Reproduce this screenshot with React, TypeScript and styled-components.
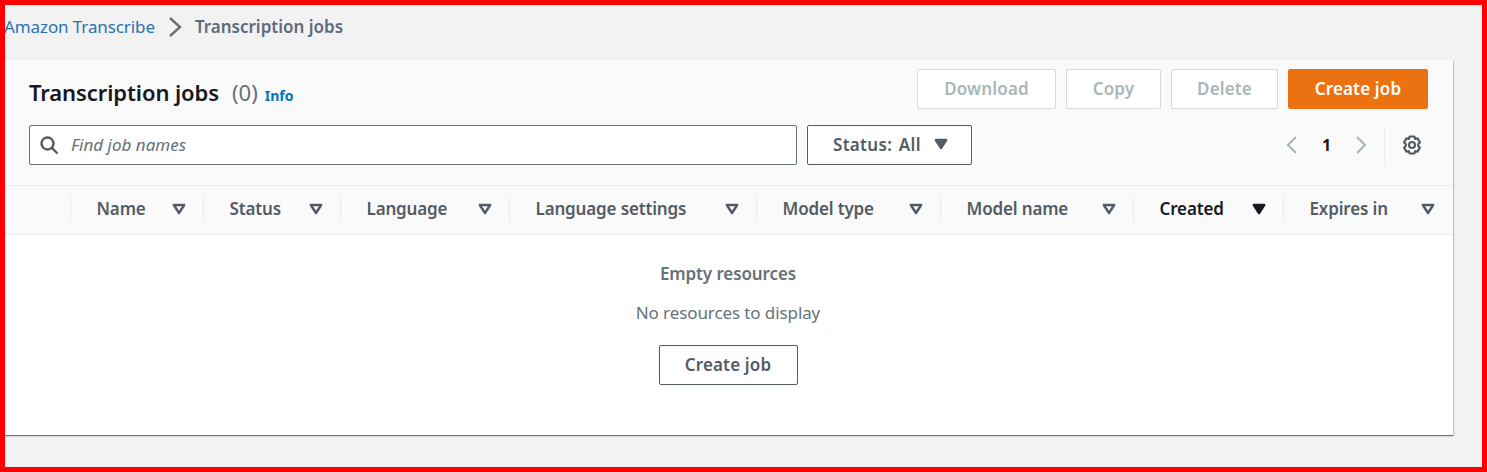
import React from "react";
import styled, { createGlobalStyle } from "styled-components";

const GlobalStyle = createGlobalStyle`
  html, body {
    margin: 0;
    padding: 0;
    background: #f2f2f2;
  }
  * {
    box-sizing: border-box;
  }
`;

const Frame = styled.div`
  width: 1487px;
  height: 472px;
  border: 5px solid #ff0000;
  background: #f2f2f2;
  font-family: "Noto Sans", "Open Sans", sans-serif;
  color: #545b64;
  overflow: hidden;
`;

const Breadcrumbs = styled.nav`
  display: flex;
  align-items: center;
  height: 55px;
  padding-bottom: 12px;
  font-size: 17px;
  letter-spacing: -0.1px;
`;

const CrumbLink = styled.a`
  color: #2a73b2;
  margin-left: -1px;
  padding-bottom: 1px;
`;

const CrumbCurrent = styled.span`
  font-weight: 600;
  color: #5f6b7a;
  padding-bottom: 1px;
  letter-spacing: 0;
`;

const CrumbArrow = styled.svg`
  width: 16px;
  height: 20px;
  margin: 0 12px;
  fill: none;
  stroke: #687078;
  stroke-width: 2.4;
`;

const Panel = styled.section`
  width: 1448px;
  height: 375px;
  background: #fff;
  box-shadow: 0 1px 1px 0 rgba(0, 28, 36, 0.5), 1px 1px 1px 0 rgba(0, 28, 36, 0.15);
  display: flex;
  flex-direction: column;
`;

const PanelHeader = styled.header`
  background: #fafafa;
  height: 126px;
  padding: 9px 25px 0 24px;
  display: flex;
  flex-direction: column;
  border-bottom: 1px solid #eaeded;
`;

const TitleRow = styled.div`
  display: flex;
  justify-content: space-between;
  align-items: center;
  height: 40px;
`;

const Title = styled.div`
  display: flex;
  align-items: baseline;
  padding-top: 6px;
`;

const Heading = styled.h1`
  margin: 0;
  font-size: 22px;
  font-weight: 600;
  color: #16191f;
  letter-spacing: -0.1px;
`;

const Count = styled.span`
  margin-left: 13px;
  font-size: 22px;
  color: #687078;
`;

const InfoLink = styled.a`
  margin-left: 7px;
  font-size: 14px;
  font-weight: 700;
  color: #0073bb;
`;

const Actions = styled.div`
  display: flex;
  gap: 10px;
`;

const Button = styled.button<{ $variant?: "disabled" | "primary" | "normal"; $width: number }>`
  width: ${(p) => p.$width}px;
  height: 40px;
  border-radius: 2px;
  font-family: inherit;
  font-size: 17px;
  font-weight: 600;
  letter-spacing: 0.15px;
  padding: 0 0 2px;
  background: ${(p) => (p.$variant === "primary" ? "#ec7211" : "#fff")};
  color: ${(p) => (p.$variant === "primary" ? "#fff" : p.$variant === "disabled" ? "#aab7b8" : "#545b64")};
  border: 1px solid ${(p) => (p.$variant === "primary" ? "#ec7211" : p.$variant === "disabled" ? "#d5dbdb" : "#545b64")};
`;

const FilterRow = styled.div`
  display: flex;
  align-items: center;
  margin-top: 16px;
  height: 40px;
`;

const SearchBox = styled.div`
  width: 768px;
  height: 40px;
  background: #fff;
  border: 1px solid #687078;
  border-radius: 2px;
  display: flex;
  align-items: center;
  padding-left: 9px;
  gap: 12px;
`;

const SearchIcon = styled.svg`
  width: 20px;
  height: 20px;
  fill: none;
  stroke: #545b64;
  stroke-width: 2.4;
`;

const Placeholder = styled.span`
  font-size: 17px;
  font-style: italic;
  color: #687078;
  padding-bottom: 2px;
`;

const StatusSelect = styled.div`
  width: 165px;
  height: 40px;
  margin-left: 10px;
  background: #fff;
  border: 1px solid #545b64;
  border-radius: 2px;
  display: flex;
  align-items: center;
  justify-content: space-between;
  padding: 0 23px 2px 25px;
  font-size: 17px;
  font-weight: 600;
  letter-spacing: 0.3px;
  word-spacing: 2px;
`;

const Pager = styled.div`
  margin-left: auto;
  display: flex;
  align-items: center;
  height: 40px;
`;

const PagerArrow = styled.svg`
  width: 16px;
  height: 22px;
  fill: none;
  stroke: #aab7b8;
  stroke-width: 2.2;
`;

const PageNumber = styled.span`
  width: 53px;
  text-align: center;
  font-size: 16px;
  font-weight: 700;
  color: #16191f;
`;

const PagerDivider = styled.div`
  width: 1px;
  height: 40px;
  background: #eaeded;
  margin: 0 16px 0 15px;
`;

const GearIcon = styled.svg`
  width: 22px;
  height: 22px;
  margin-right: 5px;
  fill: none;
  stroke: #545b64;
  stroke-width: 2.2;
`;

const TableHead = styled.div`
  display: flex;
  height: 49px;
  padding-bottom: 2px;
  background: #fafafa;
  border-bottom: 1px solid #eaeded;
  align-items: center;
`;

const HeadCell = styled.div<{ $width: number; $active?: boolean }>`
  width: ${(p) => p.$width}px;
  height: 26px;
  border-right: 1px solid #eaeded;
  display: flex;
  align-items: center;
  justify-content: space-between;
  padding: 0 17px 1px 25.5px;
  font-size: 17px;
  font-weight: 600;
  letter-spacing: -0.15px;
  color: ${(p) => (p.$active ? "#16191f" : "#545b64")};
  &:first-child {
    padding: 0;
  }
  &:last-child {
    border-right: none;
    padding-right: 18px;
  }
`;

const EmptyState = styled.div`
  flex: 1;
  display: flex;
  flex-direction: column;
  align-items: center;
  padding: 27px 2px 0 0;
`;

const EmptyTitle = styled.div`
  font-size: 17px;
  font-weight: 600;
  color: #687078;
  letter-spacing: -0.1px;
  line-height: 24px;
`;

const EmptyText = styled.div`
  margin-top: 15px;
  font-size: 17px;
  color: #687078;
  letter-spacing: -0.1px;
  line-height: 24px;
`;

const EmptyAction = styled(Button)`
  margin-top: 20px;
`;

const CaretSvg = styled.svg`
  width: 14px;
  height: 12px;
  flex-shrink: 0;
`;

const Caret: React.FC<{ solid?: boolean; color?: string }> = ({ solid, color = "#545b64" }) => (
  <CaretSvg viewBox="0 0 14 12">
    <path
      d="M1.8 2 H12.2 L7 10 Z"
      fill={solid ? color : "none"}
      stroke={color}
      strokeWidth="2.4"
      strokeLinejoin="round"
    />
  </CaretSvg>
);

const columns = [
  { label: "", width: 66 },
  { label: "Name", width: 133 },
  { label: "Status", width: 137 },
  { label: "Language", width: 169 },
  { label: "Language settings", width: 247 },
  { label: "Model type", width: 184 },
  { label: "Model name", width: 193 },
  { label: "Created", width: 150, active: true },
  { label: "Expires in", width: 169 },
];

const App: React.FC = () => {
  return (
    <Frame>
      <GlobalStyle />
      <Breadcrumbs>
        <CrumbLink>Amazon Transcribe</CrumbLink>
        <CrumbArrow viewBox="0 0 16 20">
          <path d="M3 1 L13 10 L3 19" />
        </CrumbArrow>
        <CrumbCurrent>Transcription jobs</CrumbCurrent>
      </Breadcrumbs>
      <Panel>
        <PanelHeader>
          <TitleRow>
            <Title>
              <Heading>Transcription jobs</Heading>
              <Count>(0)</Count>
              <InfoLink>Info</InfoLink>
            </Title>
            <Actions>
              <Button $variant="disabled" $width={139}>Download</Button>
              <Button $variant="disabled" $width={95}>Copy</Button>
              <Button $variant="disabled" $width={107}>Delete</Button>
              <Button $variant="primary" $width={140}>Create job</Button>
            </Actions>
          </TitleRow>
          <FilterRow>
            <SearchBox>
              <SearchIcon viewBox="0 0 20 20">
                <circle cx="8.5" cy="8.5" r="6" />
                <path d="M13 13 L18.5 18.5" />
              </SearchIcon>
              <Placeholder>Find job names</Placeholder>
            </SearchBox>
            <StatusSelect>
              Status: All
              <Caret solid />
            </StatusSelect>
            <Pager>
              <PagerArrow viewBox="0 0 16 22">
                <path d="M12 3 L4 11 L12 19" />
              </PagerArrow>
              <PageNumber>1</PageNumber>
              <PagerArrow viewBox="0 0 16 22">
                <path d="M4 3 L12 11 L4 19" />
              </PagerArrow>
              <PagerDivider />
              <GearIcon viewBox="0 0 22 22">
                <circle cx="11" cy="11" r="3" />
                <path d="M8.6 2.5 h4.8 l.7 2.4 2.4 -.6 2.4 4.1 -1.8 1.8 v1.6 l1.8 1.8 -2.4 4.1 -2.4 -.6 -.7 2.4 h-4.8 l-.7 -2.4 -2.4 .6 -2.4 -4.1 1.8 -1.8 v-1.6 l-1.8 -1.8 2.4 -4.1 2.4 .6 Z" strokeLinejoin="round" />
              </GearIcon>
            </Pager>
          </FilterRow>
        </PanelHeader>
        <TableHead>
          {columns.map((col) => (
            <HeadCell key={col.label} $width={col.width} $active={col.active}>
              {col.label && (
                <>
                  {col.label}
                  <Caret solid={col.active} color={col.active ? "#16191f" : "#545b64"} />
                </>
              )}
            </HeadCell>
          ))}
        </TableHead>
        <EmptyState>
          <EmptyTitle>Empty resources</EmptyTitle>
          <EmptyText>No resources to display</EmptyText>
          <EmptyAction $variant="normal" $width={139}>Create job</EmptyAction>
        </EmptyState>
      </Panel>
    </Frame>
  );
};

export default App;
